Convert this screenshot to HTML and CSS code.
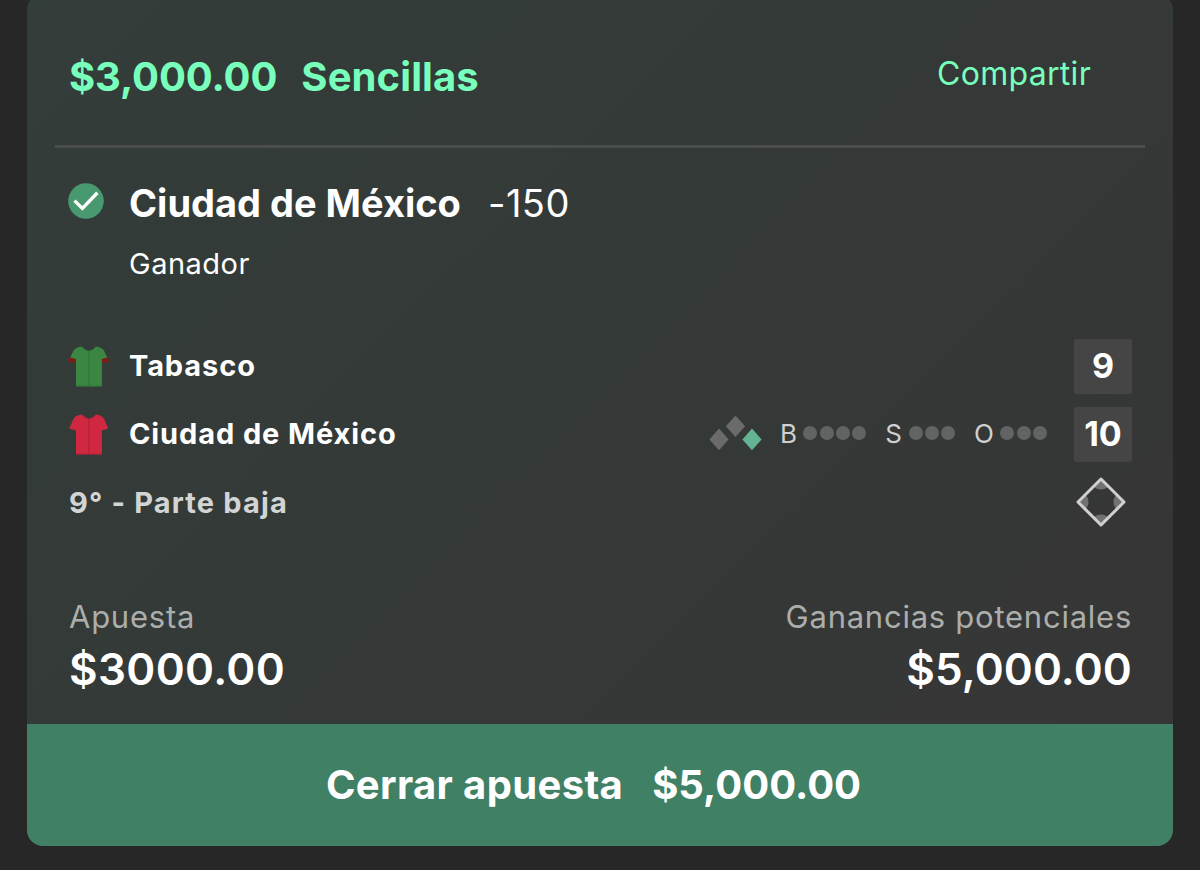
FILE: index.html
```html
<!DOCTYPE html>
<html lang="es">
<head>
  <meta charset="UTF-8" />
  <meta name="viewport" content="width=device-width, initial-scale=1.0"/>
  <title>Mis apuestas</title>
  <link rel="stylesheet" href="styles.css">
</head>
<body>
  <div class="bet-card">
    <div class="bet-header">
      <div class="bet-title"><span class="bet-stake">$3,000.00</span><span class="bet-type">Sencillas</span></div>
      <a class="share">Compartir</a>
    </div>

    <div class="selection">
      <svg class="check" viewBox="0 0 36 36">
        <circle cx="18" cy="18" r="17.8" fill="#489870"/>
        <path d="M6.5 17.6 L14.4 25.4 L29.4 9.8" fill="none" stroke="#fff" stroke-width="3.4"/>
      </svg>
      <span class="pick">Ciudad de México</span>
      <span class="odds">-150</span>
    </div>
    <div class="market">Ganador</div>

    <div class="teams">
      <div class="team">
        <svg class="shirt" viewBox="0 0 42 42">
          <path d="M1.8 12 L0 15.4 L1 16.8 L8.6 18.2 V12 Z M39.6 12 L41.4 15.4 L40.4 16.8 L33.4 18.2 V12 Z" fill="#7c1d14"/>
          <path d="M14 1.6 Q7.4 2.4 5.4 6 L2.2 12.6 L8 14 V41.4 H33.9 V14 L39.2 12.6 L36.2 6 Q34.2 2.4 27.8 1.6 Q20.9 9.4 14 1.6 Z" fill="#3a8642"/>
          <path d="M14 1.6 Q20.9 9.4 27.8 1.6" fill="none" stroke="#31502f" stroke-width="1"/>
          <path d="M20.9 5.5 V41.4 M8 41 H33.9" stroke="#2d6e37" stroke-width="0.8"/>
        </svg>
        <span class="team-name">Tabasco</span>
        <span class="score">9</span>
      </div>

      <div class="team">
        <svg class="shirt" viewBox="0 0 42 42">
          <path d="M14 1.6 Q7.4 2.4 5.4 6 L1.2 15.6 L8 17.4 V41.4 H33.9 V17.4 L40.2 15.6 L36.2 6 Q34.2 2.4 27.8 1.6 Q20.9 9.4 14 1.6 Z" fill="#d02840"/>
          <path d="M14 1.6 Q20.9 9.4 27.8 1.6" fill="none" stroke="#81283a" stroke-width="1"/>
          <path d="M20.9 5.5 V41.4 M8 41 H33.9" stroke="#a82035" stroke-width="0.8"/>
        </svg>
        <span class="team-name">Ciudad de México</span>
        <svg class="bases" viewBox="0 0 54 36">
          <path d="M10 13.6 L19.6 24.4 L10 35.2 L0.4 24.4 Z" fill="#6b6b6b"/>
          <path d="M26.5 0.4 L36.1 11.2 L26.5 22 L16.9 11.2 Z" fill="#6b6b6b"/>
          <path d="M43 13.6 L52.6 24.4 L43 35.2 L33.4 24.4 Z" fill="#63b394"/>
        </svg>
        <div class="count balls"><span class="letter">B</span><i></i><i></i><i></i><i></i></div>
        <div class="count strikes"><span class="letter">S</span><i></i><i></i><i></i></div>
        <div class="count outs"><span class="letter">O</span><i></i><i></i><i></i></div>
        <span class="score">10</span>
      </div>

      <div class="team inning">
        <span>9° - Parte baja</span>
        <svg class="field" viewBox="0 0 52 52">
          <clipPath id="diamond"><path d="M26 2 L50 26 L26 50 L2 26 Z"/></clipPath>
          <g clip-path="url(#diamond)" fill="#707171">
            <ellipse cx="26" cy="6.5" rx="9" ry="7"/>
            <ellipse cx="45.5" cy="26" rx="7" ry="9"/>
            <ellipse cx="26" cy="45.5" rx="9" ry="7"/>
            <ellipse cx="6.5" cy="26" rx="7" ry="9"/>
          </g>
          <path d="M26 3 L49 26 L26 49 L3 26 Z" fill="none" stroke="#d0d0d0" stroke-width="3" stroke-linejoin="round"/>
        </svg>
      </div>
    </div>

    <div class="amounts">
      <div class="amount">
        <div class="label">Apuesta</div>
        <div class="value value-stake">$3000.00</div>
      </div>
      <div class="amount right">
        <div class="label">Ganancias potenciales</div>
        <div class="value">$5,000.00</div>
      </div>
    </div>

    <button class="cash-out"><span class="cash-label">Cerrar apuesta</span><span class="cash-value">$5,000.00</span></button>
  </div>
</body>
</html>
```
FILE: styles.css
```css
* {
  box-sizing: border-box;
}
body {
  margin: 0;
  height: 870px;
  overflow: hidden;
  background: #272727;
  color: #fff;
  font-family: Inter, "Liberation Sans", sans-serif;
  display: flow-root;
}
.bet-card {
  width: 1146px;
  height: 852px;
  margin: -6px 27px 0;
  padding-top: 6px;
  border-radius: 16px;
  overflow: hidden;
  background: linear-gradient(135deg, #333d39 0%, #343937 50%, #363636 90%);
}
.bet-header {
  display: flex;
  justify-content: space-between;
  height: 148px;
  margin: 0 28px;
  padding: 47px 54px 0 14px;
  border-bottom: 3px solid #4a4d4b;
  color: #78ffbc;
}
.bet-title {
  font-size: 40px;
  font-weight: 700;
  line-height: 60px;
  letter-spacing: -0.1px;
}
.bet-type {
  margin-left: 24px;
  letter-spacing: 0.1px;
}
.share {
  font-size: 32px;
  line-height: 54px;
  letter-spacing: 0.3px;
}
.selection {
  display: flex;
  align-items: center;
  height: 60px;
  margin-top: 25px;
  padding-left: 41px;
}
.check {
  width: 36px;
  height: 36px;
  margin: -4px 25px 0 0;
}
.pick {
  font-size: 38px;
  font-weight: 700;
}
.odds {
  margin-left: 27px;
  font-size: 38px;
  letter-spacing: 0.5px;
}
.market {
  height: 60px;
  padding: 1px 0 0 102px;
  font-size: 29px;
  line-height: 60px;
  letter-spacing: 0.5px;
}
.teams {
  margin-top: 39px;
  padding: 0 41px;
}
.team {
  display: flex;
  align-items: center;
  height: 68px;
}
.shirt {
  width: 42px;
  height: 42px;
  margin-right: 19px;
}
.team-name {
  margin: -1px auto 0 0;
  font-size: 29px;
  font-weight: 700;
  letter-spacing: 0.9px;
}
.score {
  width: 58px;
  height: 55px;
  border-radius: 2px;
  background: #444544;
  font-size: 34px;
  font-weight: 700;
  line-height: 54px;
  text-align: center;
}
.bases {
  width: 54px;
  height: 36px;
  margin: -2px 17px 0 0;
}
.count {
  display: flex;
  align-items: center;
  gap: 2.3px;
  margin: -2px 19px 0 0;
  color: #d0d0d0;
  font-size: 26px;
}
.count i {
  width: 14px;
  height: 14px;
  border-radius: 50%;
  background: #626363;
}
.letter {
  width: 21px;
}
.outs {
  margin-right: 27px;
}
.outs .letter {
  width: 24px;
}
.inning {
  justify-content: space-between;
  padding-left: 1px;
  color: #d3d5d4;
  font-size: 29px;
  font-weight: 700;
  letter-spacing: 1.15px;
}
.field {
  width: 52px;
  height: 52px;
  margin-right: 5px;
}
.amounts {
  display: flex;
  justify-content: space-between;
  height: 188px;
  padding: 59px 41px 0 42px;
}
.label {
  height: 43px;
  color: #acaeac;
  font-size: 31px;
  line-height: 44px;
  letter-spacing: 0.75px;
}
.value {
  font-size: 44px;
  font-weight: 600;
  line-height: 62px;
  letter-spacing: 0.1px;
}
.value-stake {
  letter-spacing: 0.35px;
}
.right {
  text-align: right;
}
.cash-out {
  display: flex;
  justify-content: center;
  align-items: center;
  width: 100%;
  height: 122px;
  padding: 0 13px 2px 0;
  border: none;
  background: #408064;
  color: #fff;
  font-family: inherit;
  font-size: 40px;
  font-weight: 700;
  letter-spacing: 0;
}
.cash-label {
  letter-spacing: 0.35px;
}
.cash-value {
  margin-left: 29px;
}
```
